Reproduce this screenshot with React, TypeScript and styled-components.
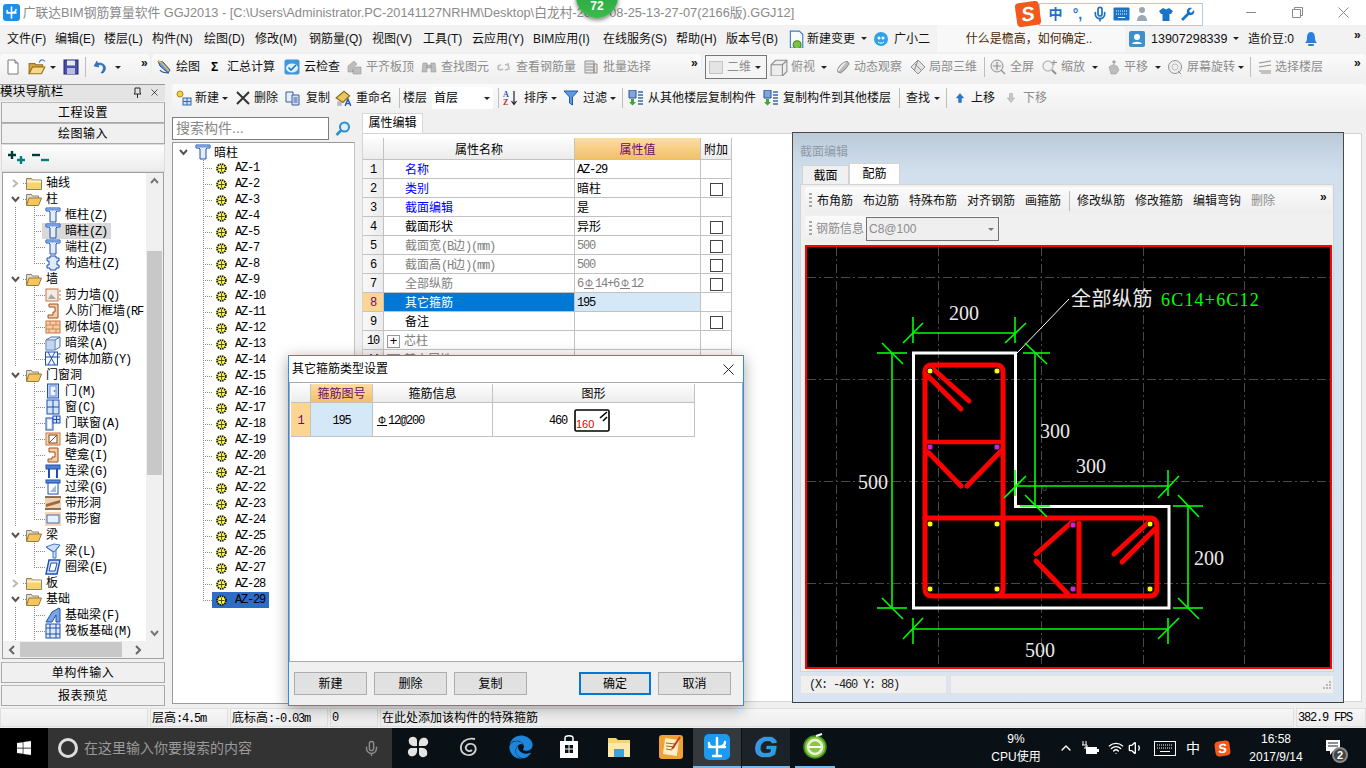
import React from 'react';
import styled, { createGlobalStyle } from 'styled-components';
import { FaEdge, FaWindows } from 'react-icons/fa';
import { Mic, ChevronUp, Wifi, Volume1, X } from 'lucide-react';

const UI = '"Liberation Sans","Noto Sans CJK SC",sans-serif';
const MONO = '"Liberation Mono","Noto Sans CJK SC",monospace';

const Global = createGlobalStyle`
  html, body { margin: 0; padding: 0; background: #f0f0f0; overflow: hidden; }
  * { box-sizing: border-box; }
`;

const Screen = styled.div`
  position: relative; width: 1366px; height: 768px; overflow: hidden;
  display: flex; flex-direction: column; background: #f0f0f0;
  font: 12px/16px ${UI}; color: #000;
`;

/* ---------- generic toolbar parts ---------- */
const Slot = styled.div<{ $w?: number; $ml?: number }>`
  flex: none; display: flex; align-items: center; white-space: nowrap;
  width: ${p => (p.$w ? p.$w + 'px' : 'auto')};
  margin-left: ${p => p.$ml || 0}px;
`;
const Label = styled.span<{ $off?: boolean; $color?: string }>`
  font-size: 12px; color: ${p => p.$color || (p.$off ? '#8c8c8c' : '#111')};
`;
const PhoneLabel = styled(Label)`
  font-size: 12.5px;
`;
const Caret = styled.i<{ $c?: string }>`
  display: block; width: 0; height: 0;
  border-left: 3px solid transparent; border-right: 3px solid transparent; border-top: 3px solid ${p => p.$c || '#222'};
`;
const Sep = styled.i`
  display: block; width: 1px; height: 20px; background: #bdbdbd;
`;
const More = styled.b`
  font: bold 12px/12px "Liberation Sans", sans-serif; color: #111; position: relative; top: -4px;
`;
const Sv = styled.svg`
  display: block; flex: none;
`;
const Ic = ({ children, s = 16 }: { children: React.ReactNode; s?: number }) => (
  <Sv width={s} height={s} viewBox="0 0 16 16">{children}</Sv>
);

type Item = [number, React.ReactNode];
const place = (base: number, list: Item[]) =>
  list.map(([x, node], i) => {
    const next = list[i + 1];
    return (
      <Slot key={i} $ml={i === 0 ? x - base : 0} $w={next ? next[0] - x : undefined}>
        {node}
      </Slot>
    );
  });

/* ---------- icons ---------- */
const gr = '#bdbdbd', grd = '#8f8f8f';
const icons = {
  newDoc: <Ic><path d="M3 1h7l3 3v11H3z" fill="#fff" stroke="#7a7a7a" /><path d="M10 1v3h3" fill="#ddd" stroke="#7a7a7a" /></Ic>,
  open: <Ic s={18}><path d="M1 5h5l1 1h6v2H4L1 14z" fill="#d9a94a" stroke="#98701f" /><path d="M4 8h11l-3 6H1z" fill="#f7d98a" stroke="#98701f" /><path d="M10 4c1-3 3-3 5-1" fill="none" stroke="#3f6fb5" /></Ic>,
  save: <Ic><rect x="1" y="1" width="14" height="14" fill="#4a4fa8" stroke="#24276e" /><rect x="4" y="1.5" width="8" height="5" fill="#e6e8f6" /><rect x="4" y="9" width="8" height="6" fill="#b9bde0" /></Ic>,
  undo: <Ic><path d="M4 2l-3 5 5 1-1-2c4-1 6 1 5 5l-2 3h2c4-3 4-11-6-10z" fill="#2f77c8" stroke="#1b4f92" strokeWidth=".5" /></Ic>,
  draw: <Ic><path d="M2 2l5 1 7 8-2 3-8-7z" fill="#6f95d6" stroke="#274f96" /><path d="M2 2l3 1 8 9" fill="none" stroke="#f2c23c" strokeWidth="1.4" /><path d="M4 11c2 3 6 3 9 3" fill="none" stroke="#274f96" strokeWidth="1.2" /></Ic>,
  cloud: <Ic><rect x="0.5" y="0.5" width="15" height="15" rx="2" fill="#3f97dc" /><ellipse cx="8" cy="9" rx="6" ry="4.5" fill="#dff0fc" /><path d="M4.5 8.5l2.5 2.5 5-5" fill="none" stroke="#1d77c2" strokeWidth="1.6" /></Ic>,
  flat: <Ic><path d="M2 13V7l6-5 3 3-4 4v4zM9 8h6v7H7V11z" fill={gr} stroke={grd} strokeWidth=".5" /></Ic>,
  binoc: <Ic><path d="M2 4h4v9H1zM10 4h4l1 9h-5zM6 6h4v3H6z" fill={gr} stroke={grd} strokeWidth=".5" /></Ic>,
  chain: <Ic><path d="M6 6c-4 0-4 5 0 5l2-1M10 6l3-1 1 5-4 1" fill="none" stroke={gr} strokeWidth="1.6" /></Ic>,
  batch: <Ic><path d="M2 2h9v12H2z M11 5h3v9h-3z" fill="#e6e6e6" stroke={grd} /><path d="M3 5h8M3 8h8M3 11h8" stroke={grd} /></Ic>,
  cube: <Ic s={18}><path d="M5 2h10v10l-4 4H1V6z" fill="#ededed" stroke={grd} /><path d="M1 6h10v10M11 6l4-4" fill="none" stroke={grd} /></Ic>,
  orbit: <Ic><path d="M3 13L12 2l3 3-9 10z" fill={gr} /><ellipse cx="8" cy="8" rx="7" ry="3" transform="rotate(-45 8 8)" fill="none" stroke={grd} /></Ic>,
  local: <Ic><path d="M8 1l7 7-7 7-7-7z" fill="#e2e2e2" stroke={grd} /><path d="M4.5 4.5l7 7M8 1l-3.5 10" stroke={grd} /></Ic>,
  zoomAll: <Ic><circle cx="7" cy="7" r="6" fill="#ececec" stroke={grd} /><path d="M7 3v8M3 7h8M11 11l4 4" stroke={grd} strokeWidth="1.2" /></Ic>,
  zoom: <Ic><circle cx="6" cy="7" r="5" fill="#f2f2f2" stroke={gr} strokeWidth="1.4" /><path d="M10 11l4 4" stroke={grd} strokeWidth="2" /><path d="M12 1v5M10 3.500h5" stroke={grd} /></Ic>,
  pan: <Ic><path d="M4 8l3-2 5 1 2 4-3 4H6z" fill={gr} stroke={grd} strokeWidth=".5" /><path d="M9 1v5M7 3h4" stroke={grd} /></Ic>,
  rot: <Ic><circle cx="8" cy="8" r="6.500" fill="#efefef" stroke={grd} /><circle cx="8" cy="8" r="3" fill="none" stroke={gr} /><path d="M11 12l3 3" stroke={grd} /></Ic>,
  floor: <Ic><path d="M2 4l12-2M2 8l12-2M2 12h12M4 14h10" stroke={grd} strokeWidth="1.2" /></Ic>,
  add: <Ic><circle cx="4" cy="4" r="3" fill="#f2d23c" stroke="#a88a1a" /><rect x="7" y="8" width="8" height="7" fill="#cfdff3" stroke="#3a69a8" /><path d="M7 11.500h8M11 8v7" stroke="#3a69a8" /></Ic>,
  del: <Ic><path d="M2 2l12 12M14 2L2 14" stroke="#333" strokeWidth="2" /></Ic>,
  copy: <Ic><path d="M1 2h7v10H1z" fill="#e6eefb" stroke="#3d5f9a" /><path d="M7 5h7v10H7z" fill="#cfe0f8" stroke="#3d5f9a" /><path d="M8.500 8h4M8.500 10h4M8.500 12h4" stroke="#3d5f9a" /></Ic>,
  rename: <Ic s={18}><path d="M1 8l7-6 5 4-6 6z" fill="#e8c75c" stroke="#8a6d1c" /><path d="M2 11h4v4H2z" fill="#8a8a8a" opacity=".55" /><path d="M9 15l2.500-6 2.500 6M10 13h3" fill="none" stroke="#2c5ca8" strokeWidth="1.300" /></Ic>,
  sort: <Ic><text x="0" y="7" fontSize="8" fontWeight="700" fontFamily="Liberation Serif" fill="#2f4fb0">A</text><text x="0" y="15" fontSize="8" fontWeight="700" fontFamily="Liberation Serif" fill="#b03030">Z</text><path d="M11 1v13M8.500 11l2.500 3.500 2.500-3.500" fill="none" stroke="#222" strokeWidth="1.2" /></Ic>,
  filter: <Ic><path d="M1 1h14l-5.500 6v8l-3-2V7z" fill="#5c9be0" stroke="#1f5aa8" /></Ic>,
  fromFloor: <Ic><path d="M1 0h7v8H1z" fill="#7ea6dc" stroke="#2b558f" /><path d="M3 9h3v3h2l-3.500 3.500L1 12h2z" fill="#3fa53f" /><path d="M10 2h5M10 5h5M10 8h5M10 11h5M10 14h5" stroke="#3a69a8" strokeWidth="1.3" /></Ic>,
  up: <Ic s={12}><path d="M8 2l5 6H10v6H6V8H3z" fill="#2a78d0" stroke="#17508f" strokeWidth=".5" /></Ic>,
  down: <Ic s={12}><path d="M8 14l5-6H10V2H6v6H3z" fill="#c7c7c7" stroke={grd} strokeWidth=".5" /></Ic>,
  changeDoc: <Ic s={18}><path d="M3 1h8l3 3v12H3z" fill="#f7fbff" stroke="#3a7dc4" /><circle cx="9" cy="13" r="3.500" fill="#7cc241" stroke="#3e8a16" /></Ic>,
  robot: <Ic s={16}><circle cx="8" cy="8" r="7" fill="#2da3e6" /><circle cx="6" cy="7" r="1.500" fill="#fff" /><circle cx="10" cy="7" r="1.500" fill="#fff" /><path d="M5 11c2 1.500 4 1.500 6 0" stroke="#fff" fill="none" /></Ic>,
  user: <Ic><rect width="16" height="16" rx="2" fill="#3f8fcb" /><circle cx="8" cy="6" r="3" fill="#fff" /><path d="M3 13c1-3 9-3 10 0z" fill="#fff" /></Ic>,
  bell: <Ic><path d="M8 1c-3 0-4 3-4 6 0 3-1 4-2 5h12c-1-1-2-2-2-5 0-3-1-6-4-6z" fill="#2b7de0" /><rect x="5" y="13" width="6" height="2" rx="1" fill="#2b7de0" /></Ic>,
  plusplus: <Sv width="18" height="14" viewBox="0 0 18 14"><path d="M4 0v8M0 4h8" stroke="#003c3a" strokeWidth="2.400" /><path d="M13 5v8M9 9h8" stroke="#00807c" strokeWidth="2.400" /></Sv>,
  minusminus: <Sv width="17" height="10" viewBox="0 0 17 10"><path d="M0 2h8" stroke="#003c3a" strokeWidth="2.400" /><path d="M9 7h8" stroke="#00807c" strokeWidth="2.400" /></Sv>,
};

const blue = '#1f4fae';
const orange = '#c8743e';
const glyphs: Record<string, React.ReactNode> = {
  col: <Ic><path d="M1 1h14v3h-3l-1 1v10H5V5L4 4H1z" fill="#e3edfc" stroke={blue} /><path d="M1.500 2.500h13" stroke="#6d9ce2" strokeWidth="2" /></Ic>,
  cons: <Ic><path d="M5 1h6v2h3v3h-2v4h2v3h-3v2H5v-2H2v-3h2V6H2V3h3z" fill="#dfeafb" stroke={blue} /></Ic>,
  shear: <Ic><rect x="1" y="2" width="12" height="12" fill="#f3ebe6" stroke={orange} /><path d="M3 12l3-5 5 5z" fill="#a8a8a8" /><path d="M14 4h2M14 8h2M14 12h2" stroke={orange} /></Ic>,
  rf: <Ic><path d="M4 1h9v14H3v-3h5V9h2V4H4z" fill="#f4cda9" stroke="#a54f1e" /></Ic>,
  brick: <Ic><rect x="1" y="2" width="14" height="12" fill="#f8cfa9" stroke={orange} /><path d="M1 6h14M1 10h14M5 2v4M11 2v4M8 6v4M4 10v4M11 10v4" stroke={orange} strokeWidth=".8" /></Ic>,
  beam: <Ic><path d="M1 5l5-3h9v10l-5 3H1z" fill="#e8f0fb" stroke="#4a6ea8" /><path d="M1 5h9v10M10 5l5-3" fill="none" stroke="#4a6ea8" /><rect x="1" y="5" width="9" height="10" fill="#9cbce6" opacity=".5" /></Ic>,
  rebar: <Ic><rect x="0.500" y="1" width="12" height="13" fill="#f2f6fd" stroke={blue} /><path d="M3 1l7 13M10 1L3 14M0 6h15M13 3h3" stroke={blue} /></Ic>,
  door: <Ic><rect x="2.500" y="1" width="11" height="14" fill="#bcd3f3" stroke={blue} /><rect x="5" y="3" width="6" height="10" fill="#eef4fd" stroke="#6b93d6" /><circle cx="9.500" cy="8" r=".8" fill={blue} /></Ic>,
  win: <Ic><rect x="2" y="1" width="12" height="14" fill="#d3e3fa" stroke={blue} /><path d="M8 1v14M2 8h12" stroke={blue} /></Ic>,
  doorwin: <Ic><rect x="1" y="3" width="7" height="12" fill="#d3e3fa" stroke={blue} /><rect x="3" y="5" width="3" height="8" fill="#fff" /><rect x="8" y="1" width="7" height="7" fill="#d3e3fa" stroke={blue} /><path d="M11.500 1v7M8 4.500h7" stroke={blue} /></Ic>,
  hole: <Ic><rect x="1" y="2" width="14" height="12" fill="#f9d4b1" stroke={orange} /><rect x="4" y="4" width="8" height="8" fill="#fff" stroke="#7a4a22" /><path d="M4 12l8-8" stroke="#7a4a22" /></Ic>,
  niche: <Ic><path d="M4 1h9v14H3v-3h4v-2h3V5H4z" fill="#f4cda9" stroke="#a54f1e" /></Ic>,
  link: <Ic><rect x="1" y="2" width="14" height="4" fill="#4f7fd0" stroke={blue} /><path d="M4 6v9M12 6v9" stroke={blue} strokeWidth="2" /></Ic>,
  lintel: <Ic><rect x="1" y="1" width="14" height="3" fill="#5f8fda" stroke={blue} /><rect x="3" y="4" width="10" height="11" fill="#fff" stroke={blue} /><path d="M5 13l6-7v7z" fill="#9cbce6" /></Ic>,
  stripHole: <Ic><rect x="0" y="2" width="16" height="12" fill="#f0d2b4" /><path d="M0 2h16M0 14h16" stroke="#6e4824" strokeWidth="1.4" /><path d="M1 9l14-4v3L1 12z" fill="#a3693a" /></Ic>,
  stripWin: <Ic><rect x="0" y="1" width="16" height="14" fill="#f9d4b1" /><rect x="2" y="4" width="12" height="8" fill="#e8f1fc" stroke="#3f6fc0" /></Ic>,
  beamL: <Ic><path d="M1 4l8-3 6 1-4 5v8H8V9z" fill="#cfe0f8" stroke="#3f78c8" /><path d="M1 4l8 5 6-7" fill="none" stroke="#3f78c8" /></Ic>,
  ring: <Ic><path d="M4 1h11l-3 14H1z" fill="#d3e3fa" stroke={blue} strokeWidth="1.4" /><path d="M6 4h6l-2 8H4z" fill="#fff" stroke={blue} /></Ic>,
  fbeam: <Ic><path d="M1 15l6-10 7-4 1 1v13h-4V8l-4 7z" fill="#7aa6e2" stroke={blue} /></Ic>,
  raft: <Ic><rect x="1" y="1" width="14" height="14" fill="#dfeafb" stroke={blue} /><path d="M1 5h14M1 11h14M5 1v14M11 1v14" stroke={blue} /></Ic>,
};

const FolderIcon = ({ open }: { open?: boolean }) =>
  open ? (
    <Sv width="16" height="13" viewBox="0 0 16 13">
      <path d="M0.500 12V1.500h5l1 1.500h6v2" fill="#e4ddc8" stroke="#8a8270" />
      <path d="M3 5h12.500L12.500 12.500H0.500z" fill="#f6c65c" stroke="#97793a" />
    </Sv>
  ) : (
    <Sv width="16" height="13" viewBox="0 0 16 13">
      <path d="M0.500 1.500h5l1 1.500h9v9.500H0.500z" fill="#f7d36c" stroke="#8a8270" />
      <rect x="1" y="3.500" width="14" height="2" fill="#fdf3cf" />
    </Sv>
  );

const ChevRight = () => (
  <Sv width="7" height="9" viewBox="0 0 7 9"><path d="M1 1l4 3.500-4 3.500" fill="none" stroke="#b8b8b8" strokeWidth="2" /></Sv>
);
const ChevDown = () => (
  <Sv width="9" height="7" viewBox="0 0 9 7"><path d="M1 1l3.500 4L8 1" fill="none" stroke="#555" strokeWidth="2" /></Sv>
);

const AzGear = () => (
  <Sv width="11" height="11" viewBox="0 0 11 11">
    <circle cx="5.500" cy="5.500" r="4.400" fill="#ffff30" stroke="#151515" strokeWidth="1.800" strokeDasharray="1.500 .8" />
    <path d="M5.500 2.500v6M2.500 5.500h6" stroke="#4c4c18" strokeWidth="1" />
  </Sv>
);

/* ---------- mixed latin/CJK text ---------- */
const Lat = styled.span`
  font: 12px ${MONO}; letter-spacing: -1.2px;
`;
const Mixed = ({ text }: { text: string }) => (
  <>
    {text.split(/([\x00-\x7f]+)/).map((part, i) =>
      /^[\x00-\x7f]+$/.test(part) ? <Lat key={i}>{part}</Lat> : part
    )}
  </>
);
const RebarMark = styled.span`
  display: inline-block; font: 10px/9px "Liberation Sans", sans-serif; width: 10px; text-align: center; letter-spacing: 0;
  border-bottom: 1px solid currentColor; height: 10px; margin: 0 1px;
`;

/* ---------- title + menu ---------- */
const TitleBar = styled.div`
  flex: none; height: 25px; background: #fff; display: flex; align-items: center; padding-left: 3px;
`;
const AppLogo = styled.div`
  width: 17px; height: 17px; border-radius: 3px; background: #1e8fe8; color: #fff;
  display: flex; align-items: center; justify-content: center;
`;
const TitleText = styled.div`
  margin-left: 3px; color: #8a8a8a; font-size: 12.75px; white-space: nowrap; width: 1213px; overflow: hidden;
`;
const WinBtns = styled.div`
  flex: none; display: flex; align-items: center; margin-left: 6px;
`;
const WinBtn = styled.div`
  width: 46px; display: flex; justify-content: center; color: #8a8a8a;
`;
const LogoMark = () => (
  <Sv width="13" height="13" viewBox="0 0 13 13">
    <path d="M6.500 1v11M2 4.500c0 3 2 2.500 9 2.500M11 3.500c0 3-2 3.500-9 3.500" fill="none" stroke="#fff" strokeWidth="1.600" strokeLinecap="round" />
  </Sv>
);

const MenuBar = styled.div`
  flex: none; height: 27px; display: flex; align-items: center; background: #f2f2f2; position: relative;
`;
const AskBox = styled.div`
  width: 188px; height: 27px; background: #f8f8f8; display: flex; align-items: center;
  justify-content: center; color: #4a2a08; border-radius: 4px 4px 0 0; padding-right: 4px;
`;
const ToolStrip = styled.div`
  flex: none; height: 30px; padding-top: 2px; display: flex;
`;
const Band = styled.div<{ $w: number }>`
  flex: none; width: ${p => p.$w}px; height: 26px; display: flex; align-items: center;
  background: linear-gradient(#fbfbfb, #efefef); border-radius: 4px; margin-right: 2px;
`;
const Combo2D = styled.div`
  width: 62px; height: 24px; border: 1px solid #757575; display: flex; align-items: center; padding: 0 3px;
  color: #8c8c8c; gap: 4px; background: #f5f5f5;
`;
const MiniSquare = styled.i`
  width: 14px; height: 13px; background: #e4e4e4; border: 1px solid #c4c4c4; display: block;
`;

/* ---------- body ---------- */
const Body = styled.div`
  flex: 1; display: flex; min-height: 0;
`;
const LeftNav = styled.aside`
  flex: none; width: 165px; padding-top: 2px; display: flex; flex-direction: column;
`;
const NavHead = styled.div`
  height: 17px; display: flex; align-items: center; justify-content: space-between; padding: 0 5px 2px 0;
  background: #e4e4e4; border-top: 1px solid #9a9a9a; font-size: 12.5px; letter-spacing: .2px;
`;
const NavHeadBtns = styled.span`
  display: flex; align-items: center; gap: 7px;
`;
const NavBtn = styled.div<{ $mt?: number }>`
  height: 21px; margin: ${p => p.$mt ?? 0}px 0 0 1px; width: 164px; border: 1px solid #a9a9a9; border-top-color: #b8b8b8;
  background: #f0f0f0; display: flex; align-items: center; justify-content: center; letter-spacing: .5px;
  font-size: 12px;
`;
const NavTools = styled.div`
  height: 28px; margin-left: 1px; width: 164px; display: flex; align-items: center; gap: 6px; padding-left: 6px;
  background: linear-gradient(#fdfdfd, #ececec); border: 1px solid #dcdcdc;
`;
const NavBox = styled.div`
  width: 162px; height: 487px; margin-left: 2px; border: 1px solid #a0a0a0; display: flex; flex-direction: column; background: #f0f0f0;
`;
const NavMain = styled.div`
  flex: 1; display: flex; min-height: 0;
`;
const NavList = styled.div`
  width: 143px; background: #fff; padding-top: 2px; overflow: hidden; flex: none;
`;

const dotV = (x: number, h: number) =>
  `repeating-linear-gradient(to bottom,#8a8a8a 0 1px,transparent 1px 2px) ${x}px 0 / 1px ${h}px no-repeat`;
const dotH = (x: number, w: number) =>
  `repeating-linear-gradient(to right,#8a8a8a 0 1px,transparent 1px 2px) ${x}px 8px / ${w}px 1px no-repeat`;

const GroupRow = styled.div<{ $lines: string }>`
  height: 16px; display: flex; align-items: center; white-space: nowrap;
  background: ${p => p.$lines};
`;
const ExpCell = styled.span`
  width: 20px; flex: none; display: flex; justify-content: center; padding-left: 4px;
`;
const FolderCell = styled.span`
  margin-left: 3px; flex: none; display: flex; width: 20px;
`;
const ChildCell = styled.span<{ $sel?: boolean }>`
  margin-left: 39px; padding: 0 4px 0 3px; height: 16px; display: flex; align-items: center; gap: 4px;
  background: ${p => (p.$sel ? '#d9d9d9' : 'transparent')};
`;
const VBar = styled.div`
  width: 17px; flex: none; background: #f0f0f0; display: flex; flex-direction: column; justify-content: space-between; align-items: center;
`;
const VThumbTrack = styled.div`
  flex: 1; width: 15px; padding-top: 62px; padding-bottom: 150px; display: flex;
`;
const VThumb = styled.div`
  flex: 1; background: #c8c8c8;
`;
const HBar = styled.div`
  height: 17px; flex: none; background: #f0f0f0; display: flex; align-items: center; padding: 0 3px 0 5px;
`;
const HThumb = styled.div`
  width: 102px; height: 15px; background: #c8c8c8; margin: 0 12px 0 4px;
`;

const navData: { t: string; lvl: 0 | 1; open?: boolean; g?: string; major?: boolean; last?: boolean; sel?: boolean }[] = [
  { t: '轴线', lvl: 0 },
  { t: '柱', lvl: 0, open: true },
  { t: '框柱(Z)', lvl: 1, g: 'col', major: true },
  { t: '暗柱(Z)', lvl: 1, g: 'col', major: true, sel: true },
  { t: '端柱(Z)', lvl: 1, g: 'col', major: true },
  { t: '构造柱(Z)', lvl: 1, g: 'cons', major: true, last: true },
  { t: '墙', lvl: 0, open: true },
  { t: '剪力墙(Q)', lvl: 1, g: 'shear', major: true },
  { t: '人防门框墙(RF', lvl: 1, g: 'rf', major: true },
  { t: '砌体墙(Q)', lvl: 1, g: 'brick', major: true },
  { t: '暗梁(A)', lvl: 1, g: 'beam', major: true },
  { t: '砌体加筋(Y)', lvl: 1, g: 'rebar', major: true, last: true },
  { t: '门窗洞', lvl: 0, open: true },
  { t: '门(M)', lvl: 1, g: 'door', major: true },
  { t: '窗(C)', lvl: 1, g: 'win', major: true },
  { t: '门联窗(A)', lvl: 1, g: 'doorwin', major: true },
  { t: '墙洞(D)', lvl: 1, g: 'hole', major: true },
  { t: '壁龛(I)', lvl: 1, g: 'niche', major: true },
  { t: '连梁(G)', lvl: 1, g: 'link', major: true },
  { t: '过梁(G)', lvl: 1, g: 'lintel', major: true },
  { t: '带形洞', lvl: 1, g: 'stripHole', major: true },
  { t: '带形窗', lvl: 1, g: 'stripWin', major: true, last: true },
  { t: '梁', lvl: 0, open: true },
  { t: '梁(L)', lvl: 1, g: 'beamL', major: true },
  { t: '圈梁(E)', lvl: 1, g: 'ring', major: true, last: true },
  { t: '板', lvl: 0 },
  { t: '基础', lvl: 0, open: true },
  { t: '基础梁(F)', lvl: 1, g: 'fbeam', major: true },
  { t: '筏板基础(M)', lvl: 1, g: 'raft', major: true },
  { t: '', lvl: 1, major: true },
];

const navLines = (r: (typeof navData)[number]) => {
  if (r.lvl === 0) return dotH(20, 6);
  const parts: string[] = [dotH(31, 11), dotV(31, r.last ? 9 : 16)];
  if (r.major) parts.push(dotV(12, 16));
  return parts.join(',');
};

/* ---------- centre tree ---------- */
const RightCol = styled.div`
  flex: 1; min-width: 0; padding-top: 2px; display: flex; flex-direction: column;
`;
const Tool2 = styled.div`
  flex: none; height: 26px; margin-left: 7px; padding-top: 2px; display: flex; align-items: center;
  background: linear-gradient(#fbfbfb, #f1f1f1); border-radius: 4px;
`;
const FloorSelect = styled.div`
  width: 61px; height: 22px; background: #fff; display: flex; align-items: center; justify-content: space-between; padding: 0 3px 0 2px;
`;
const Content = styled.div`
  flex: 1; min-height: 0; display: flex; padding-left: 7px; gap: 7px;
`;
const MidCol = styled.div`
  flex: none; width: 183px; padding-top: 7px; display: flex; flex-direction: column; gap: 2px;
`;
const SearchRow = styled.div`
  height: 23px; display: flex; align-items: center; gap: 6px;
`;
const SearchInput = styled.div`
  width: 157px; height: 23px; background: #fff; border: 1px solid #7e7e7e; color: #888; font-size: 14px; line-height: 21px; padding-left: 3px;
`;
const MidTree = styled.div`
  height: 562px; background: #fff; border: 1px solid #9a9a9a; border-right-color: #c4c4c4; padding-top: 1px; overflow: hidden;
`;
const RootRow = styled.div`
  height: 16px; display: flex; align-items: center; gap: 3px; padding-left: 6px;
`;
const RootGap = styled.span`
  width: 1px; flex: none;
`;
const RootText = styled.span`
  padding-top: 1px;
`;
const AzRow = styled.div<{ $last: boolean }>`
  height: 16px; display: flex; align-items: center; padding-left: 39px;
  background: ${p => dotV(30, p.$last ? 9 : 16)}, ${dotH(30, 9)};
`;
const AzCell = styled.span<{ $sel: boolean }>`
  width: 57px; height: 16px; display: flex; align-items: center; gap: 8px; padding-left: 4px;
  background: ${p => (p.$sel ? '#2f6cc6' : 'transparent')};
`;
const AzText = styled.span`
  font: 12px ${MONO}; letter-spacing: -1.2px;
`;

/* ---------- property table ---------- */
const RightPanel = styled.section`
  flex: none; width: 1000px; padding-top: 3px; display: flex; flex-direction: column;
`;
const TabRow = styled.div`
  height: 20px; display: flex;
`;
const TabOn = styled.div`
  width: 61px; height: 20px; background: #fff; border: 1px solid #d8d8d8; border-bottom: none; padding-bottom: 2px;
  display: flex; align-items: center; justify-content: center; letter-spacing: 0; font-size: 12px;
`;
const TabPanel = styled.div`
  height: 569px; background: #fff; border: 1px solid #d4d4d4; padding: 4px 0 0 0;
`;
const PropTable = styled.div`
  width: 370px;
`;
const PropRow = styled.div<{ $h: number }>`
  display: grid; grid-template-columns: 21px 191px 126px 31px; height: ${p => p.$h}px;
`;
const Cell = styled.div<{ $bg?: string; $color?: string; $center?: boolean; $pl?: number }>`
  display: flex; align-items: center; overflow: hidden; white-space: nowrap; font-size: 12px;
  justify-content: ${p => (p.$center ? 'center' : 'flex-start')};
  padding: 2px 0 0 ${p => p.$pl ?? 0}px;
  background: ${p => p.$bg || '#fff'}; color: ${p => p.$color || '#000'};
  border-right: 1px solid #c2c2c2; border-bottom: 1px solid #c2c2c2;
`;
const HeadCell = styled(Cell)<{ $on?: boolean }>`
  background: ${p => (p.$on ? 'linear-gradient(#fbdda6,#f2c066)' : 'linear-gradient(#fdfdfd,#ececec)')};
  color: ${p => (p.$on ? '#6d0a6e' : '#000')}; justify-content: center;
`;
const NumCell = styled(Cell)<{ $on?: boolean }>`
  background: ${p => (p.$on ? '#fdd592' : 'linear-gradient(90deg,#f8f8f8,#ececec)')};
  color: ${p => (p.$on ? '#6d0a6e' : '#000')}; justify-content: center; font: 12px ${MONO}; letter-spacing: -1.2px;
`;
const Check = styled.i`
  display: block; width: 13px; height: 13px; border: 1px solid #444; background: #fff;
`;
const PlusBox = styled.i`
  width: 13px; height: 13px; border: 1px solid #999; display: flex; align-items: center; justify-content: center;
  font: 13px/12px "Liberation Sans", sans-serif; color: #000; margin: 0 4px 0 3px; flex: none;
`;
const Mono11 = styled.span<{ $c?: string }>`
  font: 12px ${MONO}; letter-spacing: -1.2px; color: ${p => p.$c || '#000'};
`;

const propRows: { n: string; c?: string; v?: React.ReactNode; chk?: boolean; vc?: string }[] = [
  { n: '名称', c: '#0000ff', v: <Mono11>AZ-29</Mono11> },
  { n: '类别', c: '#0000ff', v: '暗柱', chk: true },
  { n: '截面编辑', c: '#0000ff', v: '是' },
  { n: '截面形状', v: '异形', chk: true },
  { n: '截面宽(B边)(mm)', c: '#808080', v: <Mono11 $c="#808080">500</Mono11>, chk: true },
  { n: '截面高(H边)(mm)', c: '#808080', v: <Mono11 $c="#808080">500</Mono11>, chk: true },
  {
    n: '全部纵筋', c: '#808080', chk: true,
    v: <Mono11 $c="#808080">6<RebarMark>Φ</RebarMark>14+6<RebarMark>Φ</RebarMark>12</Mono11>,
  },
];

/* ---------- section window ---------- */
const SectionWin = styled.div`
  position: absolute; left: 792px; top: 132px; width: 552px; height: 571px;
  border: 1px solid #4a4a4a; border-bottom-color: #3d3d3d;
  background: linear-gradient(#bbcad9 0, #d2e0ee 40px, #d9e5f2 100%);
  padding: 0 9px 0 7px; display: flex; flex-direction: column;
`;
const SectionTitle = styled.div`
  height: 30px; color: #8f9aa6; display: flex; align-items: flex-end; padding-bottom: 3px; font-size: 12px;
`;
const WinTabs = styled.div`
  height: 21px; display: flex; align-items: flex-end; padding-left: 2px;
`;
const WinTab = styled.div<{ $on?: boolean }>`
  width: ${p => (p.$on ? 51 : 47)}px; height: ${p => (p.$on ? 21 : 19)}px;
  background: ${p => (p.$on ? '#fff' : '#f0f0f0')}; border: 1px solid #d4d4d4; border-bottom: none;
  padding-top: ${p => (p.$on ? 0 : 1)}px;
  display: flex; align-items: center; justify-content: center;
`;
const WinPanel = styled.div`
  height: 488px; background: #f0f0f0; border: 1px solid #d4d4d4; padding: 2px 1px 0 4px;
  display: flex; flex-direction: column;
`;
const WinToolbar = styled.div`
  flex: none; height: 27px; display: flex; align-items: center;
  background: linear-gradient(#fbfbfb, #ededed); border-radius: 3px;
`;
const WinToolbarSmall = styled(WinToolbar)`
  width: 195px; height: 26px; margin-top: 2px;
`;
const Grip = styled.i`
  display: block; width: 3px; height: 16px;
  background: repeating-linear-gradient(to bottom,#a8a8a8 0 2px,transparent 2px 4px);
`;
const RebarSelect = styled.div`
  flex: none; width: 133px; height: 24px; border: 1px solid #707070; background: #efefef;
  display: flex; align-items: center; justify-content: space-between; padding: 0 4px 0 2px;
  color: #8c8c8c; font: 12px "Liberation Sans", sans-serif;
`;
const Canvas = styled.div`
  flex: none; width: 527px; height: 424px; margin-top: 3px; border: 2px solid #f00; background: #000;
`;
const WinStatus = styled.div`
  height: 19px; margin-top: 3px; display: flex; gap: 3px;
`;
const WinStat = styled.div<{ $w: number }>`
  width: ${p => p.$w}px; background: #f0f0f0; border: 1px solid #e2e2e2; display: flex; align-items: center; justify-content: flex-end;
  padding: 0 2px;
`;
const CoordText = styled.div`
  flex: 1; font: 12px ${MONO}; letter-spacing: -1.2px; padding-left: 6px; color: #222;
`;
const DrawingSvg = styled.svg`
  display: block;
`;

const RED = '#ff0000', GRN = '#00ff00';

const hLine = (y: number, x1: number, x2: number) => <line x1={x1} y1={y} x2={x2} y2={y} />;
const vLine = (x: number, y1: number, y2: number) => <line x1={x} y1={y1} x2={x} y2={y2} />;
const seg = (a: number, b: number, c: number, d: number) => <line x1={a} y1={b} x2={c} y2={d} />;

const dotsY: [number, number][] = [
  [930, 370], [997, 370], [930, 523], [997, 523], [1150, 523], [930, 588], [997, 588], [1150, 588],
];
const dotsP: [number, number][] = [[930, 446], [997, 446], [1073, 524], [1073, 588]];

const Drawing = () => (
  <DrawingSvg width="523" height="420" viewBox="807 246 523 420">
    <g stroke="#484848" strokeWidth="1" strokeDasharray="9 3 2 3" fill="none">
      {[836, 938, 1041, 1143, 1244].map(x => <React.Fragment key={x}>{vLine(x + 0.5, 246, 666)}</React.Fragment>)}
      {[276, 378, 480, 582].map(y => <React.Fragment key={y}>{hLine(y + 0.5, 807, 1330)}</React.Fragment>)}
    </g>
    <text x="1042" y="490" fontSize="9" fill="#555" fontFamily="Liberation Sans">0</text>
    <path d="M913.500 352H1015.500V505.500H1169V607H913.500Z" fill="none" stroke="#fff" strokeWidth="3" />
    <line x1="1017" y1="352" x2="1069" y2="298" stroke="#fff" strokeWidth="1" />
    <g stroke={RED} strokeWidth="5" fill="none" strokeLinecap="round">
      <path d="M932 364H996Q1003 364 1003 371V588Q1003 595 996 595H932Q925 595 925 588V371Q925 364 932 364Z" />
      <path d="M925 517H1150Q1157 517 1157 526V586Q1157 595 1150 595H1000" />
      <path d="M925 441H1003" strokeWidth="4.500" />
      <path d="M1079 522V592" />
      {seg(932, 367, 969, 400)}
      {seg(925, 372, 961, 408)}
      {seg(926, 449, 961, 485)}
      {seg(1001, 450, 967, 485)}
      {seg(1073, 520, 1036, 553)}
      {seg(1068, 593, 1036, 560)}
      {seg(1150, 520, 1114, 553)}
      {seg(1155, 528, 1122, 561)}
    </g>
    {dotsY.map(([x, y]) => <circle key={x + '-' + y} cx={x} cy={y} r="3" fill="#ffff00" stroke="#222" strokeWidth="1" />)}
    {dotsP.map(([x, y]) => <circle key={x + '-' + y} cx={x} cy={y} r="3" fill="#d020e0" stroke="#222" strokeWidth="1" />)}
    <g stroke={GRN} strokeWidth="1.600" fill="none">
      {hLine(332, 913, 1015)}{vLine(913, 316, 342)}{vLine(1015, 316, 342)}
      {seg(903, 342, 923, 322)}{seg(1005, 342, 1026, 322)}
      {vLine(892, 352, 607)}{hLine(352, 877, 907)}{hLine(607, 877, 907)}
      {seg(882, 342, 903, 363)}{seg(882, 597, 903, 618)}
      {vLine(1035, 352, 505)}{hLine(352, 1023, 1050)}{hLine(505, 1020, 1050)}
      {seg(1025, 342, 1047, 363)}{seg(1025, 494, 1047, 516)}
      {hLine(485, 1015, 1168)}{vLine(1015, 469, 495)}{vLine(1168, 469, 495)}
      {seg(1004, 497, 1026, 475)}{seg(1158, 497, 1179, 475)}
      {vLine(1188, 505, 607)}{hLine(505, 1173, 1203)}{hLine(607, 1173, 1203)}
      {seg(1178, 494, 1199, 516)}{seg(1178, 597, 1199, 618)}
      {hLine(628, 913, 1168)}{vLine(913, 617, 643)}{vLine(1168, 617, 643)}
      {seg(903, 638, 923, 617)}{seg(1158, 638, 1179, 617)}
    </g>
    <g fill="#eaeaea" fontFamily='"Liberation Serif",serif' fontSize="20" textAnchor="middle">
      <text x="964" y="319">200</text>
      <text x="873" y="488">500</text>
      <text x="1055" y="437">300</text>
      <text x="1091" y="472">300</text>
      <text x="1209" y="564">200</text>
      <text x="1040" y="656">500</text>
    </g>
    <text x="1071" y="305" fill="#eaeaea" fontSize="20" letterSpacing="0.500" fontFamily='"Noto Sans CJK SC",sans-serif'>全部纵筋</text>
    <text x="1161" y="305" fill={GRN} fontSize="18" letterSpacing="1.200" fontFamily='"Liberation Serif",serif'>6C14+6C12</text>
  </DrawingSvg>
);

/* ---------- dialog ---------- */
const Dialog = styled.div`
  position: absolute; left: 288px; top: 355px; width: 456px; height: 351px; background: #f0f0f0;
  border: 1px solid #2e8fe8; box-shadow: 0 3px 14px rgba(0,0,0,.35); display: flex; flex-direction: column;
`;
const DlgTitle = styled.div`
  height: 26px; flex: none; background: #fff; display: flex; align-items: center; justify-content: space-between;
  padding: 0 9px 0 3px; font-size: 12px;
`;
const DlgGridArea = styled.div`
  height: 280px; flex: none; width: 454px; background: #fff; border: 1px solid #aaa; padding: 1px 0 0 1px;
`;
const DlgRow = styled.div<{ $h: number }>`
  display: grid; grid-template-columns: 20px 62px 120px 202px; height: ${p => p.$h}px; width: 404px;
`;
const DlgFooter = styled.div`
  flex: 1; display: flex; align-items: flex-start; padding: 10px 0 0 5px; gap: 7px;
`;
const DlgBtn = styled.div<{ $ml?: number; $main?: boolean }>`
  width: ${p => (p.$main ? 72 : 73)}px; height: 23px; display: flex; align-items: center; justify-content: center;
  background: #e1e1e1; margin-left: ${p => p.$ml || 0}px; font-size: 12px;
  border: ${p => (p.$main ? '2px solid #0078d7' : '1px solid #adadad')};
`;
const DlgShape = styled.span`
  margin-left: 7px; display: flex;
`;

/* ---------- status + taskbar ---------- */
const StatusBar = styled.footer`
  flex: none; height: 21px; display: flex; gap: 2px; padding-top: 1px;
  background: #f0f0f0;
`;
const StatCell = styled.div<{ $w: number }>`
  flex: none; width: ${p => p.$w}px; height: 19px; background: linear-gradient(#f7f7f7, #ededed); border: 1px solid #dedede;
  display: flex; align-items: center; padding-left: 1px; white-space: nowrap; font-size: 12px;
`;
const Taskbar = styled.div`
  flex: none; height: 40px; display: flex; background: #0a1116; color: #fff;
`;
const StartBtn = styled.div`
  width: 48px; background: #000; display: flex; align-items: center; justify-content: center;
`;
const SearchBar = styled.div`
  width: 344px; background: #333; display: flex; align-items: center; padding-left: 10px; color: #9a9a9a; font-size: 14px;
`;
const Ring = styled.i`
  display: block; width: 20px; height: 20px; border-radius: 50%; border: 3px solid #ddd; margin-right: 6px; flex: none;
`;
const MicWrap = styled.span`
  margin-left: auto; margin-right: 12px; display: flex; color: #8d8d8d;
`;
const AppBtn = styled.div<{ $w?: number; $on?: boolean; $run?: boolean; $under?: boolean; $ml?: number }>`
  width: ${p => p.$w || 49}px; flex: none; display: flex; align-items: center; justify-content: center;
  margin-left: ${p => p.$ml || 0}px;
  background: ${p => (p.$on ? '#33393d' : p.$run ? '#1c2328' : 'transparent')};
  border-bottom: ${p => (p.$on || p.$run || p.$under ? '2px solid #76b9ed' : '2px solid transparent')};
`;
const Tray = styled.div`
  margin-left: auto; display: flex; align-items: center; padding-right: 8px;
`;
const TrayText = styled.div<{ $w: number; $mr?: number }>`
  width: ${p => p.$w}px; margin-right: ${p => p.$mr || 0}px; flex: none;
  display: flex; flex-direction: column; align-items: center; font-size: 12px; line-height: 18px; white-space: nowrap;
`;
const TrayItem = styled.span<{ $w: number }>`
  width: ${p => p.$w}px; display: flex; justify-content: center; font-size: 14px; flex: none;
`;
const Notif = styled.div`
  position: relative; width: 50px; height: 40px; display: flex; align-items: center; justify-content: center;
`;
const NotifBadge = styled.span`
  position: absolute; left: 24px; top: 19px; width: 16px; height: 16px; border-radius: 50%; background: #444; border: 2px solid #888;
  font: bold 11px/12px "Liberation Sans", sans-serif; text-align: center; color: #fff;
`;
const SogouS = styled.div<{ $s: number }>`
  width: ${p => p.$s}px; height: ${p => p.$s}px; border-radius: 4px; background: #f2591a; color: #fff;
  transform: rotate(-8deg); display: flex; align-items: center; justify-content: center;
  font: italic bold ${p => Math.round(p.$s * 0.85)}px/1 "Liberation Sans", sans-serif;
`;

/* ---------- overlays on the title bar ---------- */
const Badge = styled.div`
  position: absolute; left: 576px; top: -24px; width: 42px; height: 42px; border-radius: 50%;
  background: linear-gradient(#1f9a3f, #3dbb4b); box-shadow: 0 2px 4px rgba(0,0,0,.5); color: #fff;
  display: flex; align-items: flex-end; justify-content: center; font: bold 12px/22px "Liberation Sans", sans-serif; padding-bottom: 1px;
`;
const ImeWrap = styled.div`
  position: absolute; left: 1016px; top: 2px; display: flex; align-items: center;
`;
const ImeBar = styled.div`
  width: 164px; height: 23px; border: 1px solid #a9cbe4; background: #fff; margin-left: -1px; display: flex; align-items: center;
  color: #1a73c8; padding-left: 7px; gap: 5px;
`;
const ImeCell = styled.span<{ $w?: number }>`
  width: ${p => p.$w || 17}px; display: flex; justify-content: center; font-weight: 700; font-size: 14px;
`;

const BlueLogo = () => (
  <Sv width="26" height="26" viewBox="0 0 26 26">
    <rect width="26" height="26" rx="5" fill="#1b9af0" />
    <path d="M13 4v18M9 22h8M5 9c0 5 3 4 16 4M21 8c0 5-4 5-16 5" fill="none" stroke="#fff" strokeWidth="2.400" strokeLinecap="round" />
  </Sv>
);
const Pinwheel = () => (
  <Sv width="24" height="24" viewBox="0 0 24 24">
    <g fill="#e4e4e4">
      <path d="M11 11C4 12 2 8 3 4c2-3 7-3 8 1z" /><path d="M13 11c-1-7 3-9 7-8 3 2 3 7-1 8z" />
      <path d="M13 13c7-1 9 3 8 7-2 3-7 3-8-1z" /><path d="M11 13c1 7-3 9-7 8-3-2-3-7 1-8z" />
    </g>
  </Sv>
);
const Swirl = () => (
  <Sv width="22" height="22" viewBox="0 0 22 22">
    <path d="M17 3C8 1 2 7 3 13c1 6 9 8 13 4 3-3 2-8-2-9-4-1-7 2-6 5 1 2 4 3 6 1" fill="none" stroke="#cfcfcf" strokeWidth="1.800" />
  </Sv>
);
const StoreIcon = () => (
  <Sv width="20" height="24" viewBox="0 0 20 24">
    <path d="M1 6h18v17H1z" fill="#fff" /><path d="M6 6V3c0-3 8-3 8 0v3" fill="none" stroke="#fff" strokeWidth="1.500" />
    <path d="M6 10h3.500v3.500H6zM10.500 10H14v3.500h-3.500zM6 14.500h3.500V18H6zM10.500 14.500H14V18h-3.500z" fill="#0a1116" />
  </Sv>
);
const FolderTask = () => (
  <Sv width="24" height="22" viewBox="0 0 24 22">
    <path d="M1 2h8l2 2h12v17H1z" fill="#f3d278" /><rect x="1" y="7" width="22" height="14" fill="#fbe9ac" /><rect x="7" y="13" width="10" height="8" fill="#3aa3dc" />
  </Sv>
);
const NoteTask = () => (
  <Sv width="26" height="26" viewBox="0 0 26 26">
    <rect x="1" y="1" width="24" height="24" rx="3" fill="#f1a22f" /><path d="M6 5h14v16H6z" fill="#fdeec8" transform="rotate(8 13 13)" />
    <path d="M8 9l9 1M8 12l9 1M8 15l6 1" stroke="#a9681c" /><path d="M22 3l-8 12" stroke="#c43c16" strokeWidth="2" />
  </Sv>
);
const GTask = styled.span`
  font: italic 900 30px/30px "Liberation Sans", sans-serif; color: #2a9bea; text-shadow: 0 0 1px #bfe4fb;
`;
const GreenE = () => (
  <Sv width="26" height="28" viewBox="0 0 26 28">
    <circle cx="13" cy="14" r="11" fill="#8cc63f" stroke="#3e8e1c" strokeWidth="1.500" />
    <circle cx="13" cy="14" r="7" fill="none" stroke="#e8f5d8" strokeWidth="2.500" />
    <path d="M7 14h12M14 3l6-2" stroke="#fff" strokeWidth="2" />
  </Sv>
);
const BatteryIc = () => (
  <Sv width="18" height="16" viewBox="0 0 18 16">
    <path d="M2 1v4M5 1v4M1 5h5v2H4v2" stroke="#fff" fill="none" /><rect x="5" y="7" width="11" height="7" fill="#fff" /><rect x="16" y="9" width="2" height="3" fill="#fff" />
  </Sv>
);
const KbdIc = () => (
  <Sv width="22" height="15" viewBox="0 0 22 15">
    <rect x=".5" y=".5" width="21" height="14" fill="none" stroke="#fff" />
    <path d="M3 4h16M3 7h16" stroke="#fff" strokeDasharray="1 1" /><path d="M6 10.500h10" stroke="#fff" />
  </Sv>
);
const NotifIc = () => (
  <Sv width="14" height="16" viewBox="0 0 14 16">
    <path d="M0 0h14v11H7l-3 4v-4H0z" fill="#fff" /><path d="M2 3h10M2 6h10" stroke="#222" />
  </Sv>
);
const WinMin = () => <Sv width="11" height="11" viewBox="0 0 11 11"><path d="M0 5.500h10" stroke="#8a8a8a" /></Sv>;
const WinMax = () => <Sv width="11" height="11" viewBox="0 0 11 11"><path d="M.5 2.500h8v8h-8zM2.500 2.500v-2h8v8h-2" fill="none" stroke="#8a8a8a" /></Sv>;
const WinClose = () => <Sv width="11" height="11" viewBox="0 0 11 11"><path d="M.5.5l10 10M10.500.5l-10 10" stroke="#8a8a8a" /></Sv>;

const L = (t: string, off?: boolean) => <Label $off={off}>{t}</Label>;

const azNames = [1, 2, 3, 4, 5, ...Array.from({ length: 23 }, (_, i) => i + 7)].map(n => 'AZ-' + n);

export default function App() {
  return (
    <Screen>
      <Global />
      <TitleBar>
        <AppLogo><LogoMark /></AppLogo>
        <TitleText>广联达BIM钢筋算量软件 GGJ2013 - [C:\Users\Administrator.PC-20141127NRHM\Desktop\白龙村-2017-08-25-13-27-07(2166版).GGJ12]</TitleText>
        <WinBtns>
          <WinBtn><WinMin /></WinBtn>
          <WinBtn><WinMax /></WinBtn>
          <WinBtn><WinClose /></WinBtn>
        </WinBtns>
      </TitleBar>

      <MenuBar>
        {place(0, [
          [7, L('文件(F)')], [55, L('编辑(E)')], [104, L('楼层(L)')], [152, L('构件(N)')], [204, L('绘图(D)')],
          [255, L('修改(M)')], [309, L('钢筋量(Q)')], [372, L('视图(V)')], [423, L('工具(T)')], [472, L('云应用(Y)')],
          [533, L('BIM应用(I)')], [603, L('在线服务(S)')], [676, L('帮助(H)')], [726, L('版本号(B)')],
          [787, icons.changeDoc], [807, L('新建变更')], [861, <Caret />], [873, icons.robot], [894, L('广小二')],
          [937, <AskBox>什么是檐高，如何确定..</AskBox>], [1129, icons.user], [1151, <PhoneLabel>13907298339</PhoneLabel>], [1233, <Caret />],
          [1248, L('造价豆:0')], [1303, icons.bell], [1354, <More>»</More>],
        ])}
      </MenuBar>

      <ToolStrip>
        <Band $w={150}>
          {place(0, [
            [5, icons.newDoc], [28, icons.open], [50, <Caret />], [63, icons.save], [85, <Sep />], [93, icons.undo],
            [115, <Caret />], [141, <More>»</More>],
          ])}
        </Band>
        <Band $w={549}>
          {place(152, [
            [156, icons.draw], [176, L('绘图')], [211, <Label $color="#000"><b>Σ</b></Label>], [227, L('汇总计算')],
            [284, icons.cloud], [304, L('云检查')], [346, icons.flat], [366, L('平齐板顶', true)], [421, icons.binoc],
            [441, L('查找图元', true)], [495, icons.chain], [516, L('查看钢筋量', true)], [583, icons.batch],
            [603, L('批量选择', true)], [691, <More>»</More>],
          ])}
        </Band>
        <Band $w={663}>
          {place(703, [
            [705, <Combo2D><MiniSquare />二维<Caret /></Combo2D>], [770, icons.cube], [791, L('俯视', true)], [821, <Caret />],
            [835, icons.orbit], [854, L('动态观察', true)], [910, icons.local], [929, L('局部三维', true)], [984, <Sep />],
            [990, icons.zoomAll], [1010, L('全屏', true)], [1042, icons.zoom], [1061, L('缩放', true)], [1092, <Caret />],
            [1105, icons.pan], [1124, L('平移', true)], [1155, <Caret />], [1167, icons.rot], [1187, L('屏幕旋转', true)],
            [1238, <Caret />], [1250, <Sep />], [1257, icons.floor], [1275, L('选择楼层', true)], [1354, <More>»</More>],
          ])}
        </Band>
      </ToolStrip>

      <Body>
        <LeftNav>
          <NavHead>
            <span>模块导航栏</span>
            <NavHeadBtns>
              <Sv width="9" height="11" viewBox="0 0 9 11"><path d="M2 1h5v5l1 1H1l1-1zM4.500 7v4" fill="none" stroke="#222" /></Sv>
              <X size={11} strokeWidth={1.4} />
            </NavHeadBtns>
          </NavHead>
          <NavBtn $mt={1}>工程设置</NavBtn>
          <NavBtn>绘图输入</NavBtn>
          <NavTools>{icons.plusplus}{icons.minusminus}</NavTools>
          <NavBox>
            <NavMain>
              <NavList>
                {navData.map((r, i) => (
                  <GroupRow key={i} $lines={navLines(r)}>
                    {r.lvl === 0 ? (
                      <>
                        <ExpCell>{r.open ? <ChevDown /> : <ChevRight />}</ExpCell>
                        <FolderCell><FolderIcon open={r.open} /></FolderCell>
                        <span>{r.t}</span>
                      </>
                    ) : (
                      <ChildCell $sel={r.sel}>
                        {r.g ? glyphs[r.g] : null}
                        <span><Mixed text={r.t} /></span>
                      </ChildCell>
                    )}
                  </GroupRow>
                ))}
              </NavList>
              <VBar>
                <Sv width="9" height="16" viewBox="0 0 9 16"><path d="M1 10l3.500-4L8 10" fill="none" stroke="#777" strokeWidth="2" /></Sv>
                <VThumbTrack><VThumb /></VThumbTrack>
                <Sv width="9" height="16" viewBox="0 0 9 16"><path d="M1 6l3.500 4L8 6" fill="none" stroke="#777" strokeWidth="2" /></Sv>
              </VBar>
            </NavMain>
            <HBar>
              <Sv width="8" height="10" viewBox="0 0 8 10"><path d="M6 1L2 5l4 4" fill="none" stroke="#666" strokeWidth="2" /></Sv>
              <HThumb />
              <Sv width="8" height="10" viewBox="0 0 8 10"><path d="M2 1l4 4-4 4" fill="none" stroke="#666" strokeWidth="2" /></Sv>
            </HBar>
          </NavBox>
          <NavBtn $mt={3}>单构件输入</NavBtn>
          <NavBtn $mt={2}>报表预览</NavBtn>
        </LeftNav>

        <RightCol>
          <Tool2>
            {place(172, [
              [176, icons.add], [195, L('新建')], [222, <Caret />], [235, icons.del], [254, L('删除')], [285, icons.copy],
              [306, L('复制')], [335, icons.rename], [356, L('重命名')], [399, <Sep />], [403, L('楼层')],
              [432, <FloorSelect>首层<Caret /></FloorSelect>], [498, <Sep />], [503, icons.sort], [524, L('排序')],
              [551, <Caret />], [563, icons.filter], [583, L('过滤')], [610, <Caret />], [622, <Sep />], [628, icons.fromFloor],
              [648, L('从其他楼层复制构件')], [763, icons.fromFloor], [783, L('复制构件到其他楼层')], [899, <Sep />], [906, L('查找')],
              [934, <Caret />], [946, <Sep />], [954, icons.up], [971, L('上移')], [1005, icons.down], [1023, L('下移', true)],
            ])}
          </Tool2>
          <Content>
            <MidCol>
              <SearchRow>
                <SearchInput>搜索构件...</SearchInput>
                <Sv width="16" height="16" viewBox="0 0 16 16">
                  <circle cx="9.500" cy="6" r="4.500" fill="#dff0fb" stroke="#2b8fd6" strokeWidth="2" />
                  <path d="M6 9.500L1.500 14" stroke="#2b8fd6" strokeWidth="2.600" />
                </Sv>
              </SearchRow>
              <MidTree>
                <RootRow>
                  <ChevDown />
                  <RootGap />
                  {glyphs.col}
                  <RootText>暗柱</RootText>
                </RootRow>
                {azNames.map((n, i) => (
                  <AzRow key={n} $last={i === azNames.length - 1}>
                    <AzCell $sel={n === 'AZ-29'}>
                      <AzGear />
                      <AzText>{n}</AzText>
                    </AzCell>
                  </AzRow>
                ))}
              </MidTree>
            </MidCol>

            <RightPanel>
              <TabRow><TabOn>属性编辑</TabOn></TabRow>
              <TabPanel>
                <PropTable>
                  <PropRow $h={22}>
                    <HeadCell />
                    <HeadCell>属性名称</HeadCell>
                    <HeadCell $on>属性值</HeadCell>
                    <HeadCell>附加</HeadCell>
                  </PropRow>
                  {propRows.map((r, i) => (
                    <PropRow key={i} $h={19}>
                      <NumCell>{i + 1}</NumCell>
                      <Cell $pl={21} $color={r.c}><span><Mixed text={r.n} /></span></Cell>
                      <Cell $pl={2}>{r.v}</Cell>
                      <Cell $center>{r.chk && <Check />}</Cell>
                    </PropRow>
                  ))}
                  <PropRow $h={19}>
                    <NumCell $on>8</NumCell>
                    <Cell $pl={21} $bg="#0078d7" $color="#fff">其它箍筋</Cell>
                    <Cell $pl={2} $bg="#d5e8f8"><Mono11>195</Mono11></Cell>
                    <Cell />
                  </PropRow>
                  <PropRow $h={19}>
                    <NumCell>9</NumCell>
                    <Cell $pl={21}>备注</Cell>
                    <Cell />
                    <Cell $center><Check /></Cell>
                  </PropRow>
                  <PropRow $h={19}>
                    <NumCell>10</NumCell>
                    <Cell $color="#808080"><PlusBox>+</PlusBox>芯柱</Cell>
                    <Cell />
                    <Cell />
                  </PropRow>
                  <PropRow $h={19}>
                    <NumCell>11</NumCell>
                    <Cell $color="#808080"><PlusBox>+</PlusBox>其它属性</Cell>
                    <Cell />
                    <Cell />
                  </PropRow>
                </PropTable>
              </TabPanel>
            </RightPanel>
          </Content>
        </RightCol>
      </Body>

      <StatusBar>
        <StatCell $w={148} />
        <StatCell $w={78}><span><Mixed text="层高:4.5m" /></span></StatCell>
        <StatCell $w={98}><span><Mixed text="底标高:-0.03m" /></span></StatCell>
        <StatCell $w={48}><Lat>0</Lat></StatCell>
        <StatCell $w={914}>在此处添加该构件的特殊箍筋</StatCell>
        <StatCell $w={70}><Lat>382.9 FPS</Lat></StatCell>
      </StatusBar>

      <Taskbar>
        <StartBtn><FaWindows size={16} color="#fff" /></StartBtn>
        <SearchBar>
          <Ring />
          在这里输入你要搜索的内容
          <MicWrap><Mic size={17} /></MicWrap>
        </SearchBar>
        <AppBtn $w={52}><Pinwheel /></AppBtn>
        <AppBtn><Swirl /></AppBtn>
        <AppBtn $w={56}><FaEdge size={24} color="#1c86dc" /></AppBtn>
        <AppBtn $w={40}><StoreIcon /></AppBtn>
        <AppBtn $w={60}><FolderTask /></AppBtn>
        <AppBtn $w={44}><NoteTask /></AppBtn>
        <AppBtn $w={48} $on><BlueLogo /></AppBtn>
        <AppBtn $ml={1} $w={48} $run><GTask>G</GTask></AppBtn>
        <AppBtn $ml={5} $w={40} $under><GreenE /></AppBtn>
        <Tray>
          <TrayText $w={48} $mr={16}><span>9%</span><span>CPU使用</span></TrayText>
          <TrayItem $w={20}><ChevronUp size={16} /></TrayItem>
          <TrayItem $w={28}><BatteryIc /></TrayItem>
          <TrayItem $w={24}><Wifi size={16} /></TrayItem>
          <TrayItem $w={16}><Volume1 size={16} /></TrayItem>
          <TrayItem $w={42}><KbdIc /></TrayItem>
          <TrayItem $w={14}>中</TrayItem>
          <TrayItem $w={44}><SogouS $s={15}>S</SogouS></TrayItem>
          <TrayText $w={64}><span>16:58</span><span>2017/9/14</span></TrayText>
          <Notif><NotifIc /><NotifBadge>2</NotifBadge></Notif>
        </Tray>
      </Taskbar>

      <Badge>72</Badge>
      <ImeWrap>
        <SogouS $s={24}>S</SogouS>
        <ImeBar>
          <ImeCell>中</ImeCell>
          <ImeCell>°,</ImeCell>
          <ImeCell><Mic size={16} strokeWidth={2.600} /></ImeCell>
          <ImeCell>
            <Sv width="17" height="14" viewBox="0 0 17 14"><rect x=".5" y=".5" width="16" height="13" rx="1" fill="#1a73c8" /><path d="M3 4h11M3 7h11" stroke="#fff" strokeDasharray="1 1" /><path d="M5 10.500h7" stroke="#fff" /></Sv>
          </ImeCell>
          <ImeCell>
            <Sv width="15" height="16" viewBox="0 0 15 16"><circle cx="6" cy="4" r="3" fill="#9aa8b4" /><path d="M1 15c0-8 10-8 10 0z" fill="#9aa8b4" /></Sv>
          </ImeCell>
          <ImeCell>
            <Sv width="16" height="15" viewBox="0 0 16 15"><path d="M5 1l3 1.500L11 1l4 3-2 3h-1.500v7h-7V7H3L1 4z" fill="#1a73c8" /></Sv>
          </ImeCell>
          <ImeCell>
            <Sv width="15" height="15" viewBox="0 0 15 15"><path d="M14 3l-3 3-2-2 3-3c-3-1-6 1-5 5L1 12l2 2 6-6c4 1 6-2 5-5z" fill="#1a73c8" /></Sv>
          </ImeCell>
        </ImeBar>
      </ImeWrap>

      <SectionWin>
        <SectionTitle>截面编辑</SectionTitle>
        <WinTabs>
          <WinTab>截面</WinTab>
          <WinTab $on>配筋</WinTab>
        </WinTabs>
        <WinPanel>
          <WinToolbar>
            {place(805, [
              [809, <Grip />], [817, L('布角筋')], [863, L('布边筋')], [909, L('特殊布筋')], [967, L('对齐钢筋')], [1025, L('画箍筋')],
              [1069, <Sep />], [1077, L('修改纵筋')], [1135, L('修改箍筋')], [1193, L('编辑弯钩')], [1251, L('删除', true)],
              [1320, <More>»</More>],
            ])}
          </WinToolbar>
          <WinToolbarSmall>
            {place(805, [
              [809, <Grip />], [816, L('钢筋信息', true)],
              [866, <RebarSelect>C8@100<Caret $c="#777" /></RebarSelect>],
            ])}
          </WinToolbarSmall>
          <Canvas><Drawing /></Canvas>
        </WinPanel>
        <WinStatus>
          <WinStat $w={147}><CoordText>(X: -460 Y: 88)</CoordText></WinStat>
          <WinStat $w={385}>
            <Sv width="9" height="9" viewBox="0 0 9 9"><path d="M7 1h2v2H7zM4 4h2v2H4zM7 4h2v2H7zM1 7h2v2H1zM4 7h2v2H4zM7 7h2v2H7z" fill="#b8b8b8" /></Sv>
          </WinStat>
        </WinStatus>
      </SectionWin>

      <Dialog>
        <DlgTitle>
          <span>其它箍筋类型设置</span>
          <Sv width="11" height="11" viewBox="0 0 11 11"><path d="M.5.5l10 10M10.500.5l-10 10" stroke="#222" /></Sv>
        </DlgTitle>
        <DlgGridArea>
          <DlgRow $h={19}>
            <HeadCell />
            <HeadCell $on>箍筋图号</HeadCell>
            <HeadCell>箍筋信息</HeadCell>
            <HeadCell>图形</HeadCell>
          </DlgRow>
          <DlgRow $h={34}>
            <NumCell $on>1</NumCell>
            <Cell $center $bg="#d5e8f8"><Mono11>195</Mono11></Cell>
            <Cell $pl={3}><Mono11><RebarMark>Φ</RebarMark>12@200</Mono11></Cell>
            <Cell $pl={56}>
              <Mono11>460</Mono11>
              <DlgShape>
                <Sv width="36" height="24" viewBox="0 0 36 24">
                  <rect x="1" y="1" width="34" height="21" rx="1.500" fill="#fff" stroke="#000" strokeWidth="1.600" />
                  <path d="M33 3l-7 6M33 8l-4 4" stroke="#000" strokeWidth="1.600" />
                  <text x="2" y="19" fontSize="11" fontFamily="Liberation Sans" fill="#e00000">160</text>
                </Sv>
              </DlgShape>
            </Cell>
          </DlgRow>
        </DlgGridArea>
        <DlgFooter>
          <DlgBtn>新建</DlgBtn>
          <DlgBtn>删除</DlgBtn>
          <DlgBtn>复制</DlgBtn>
          <DlgBtn $ml={45} $main>确定</DlgBtn>
          <DlgBtn $main={false}>取消</DlgBtn>
        </DlgFooter>
      </Dialog>
    </Screen>
  );
}
